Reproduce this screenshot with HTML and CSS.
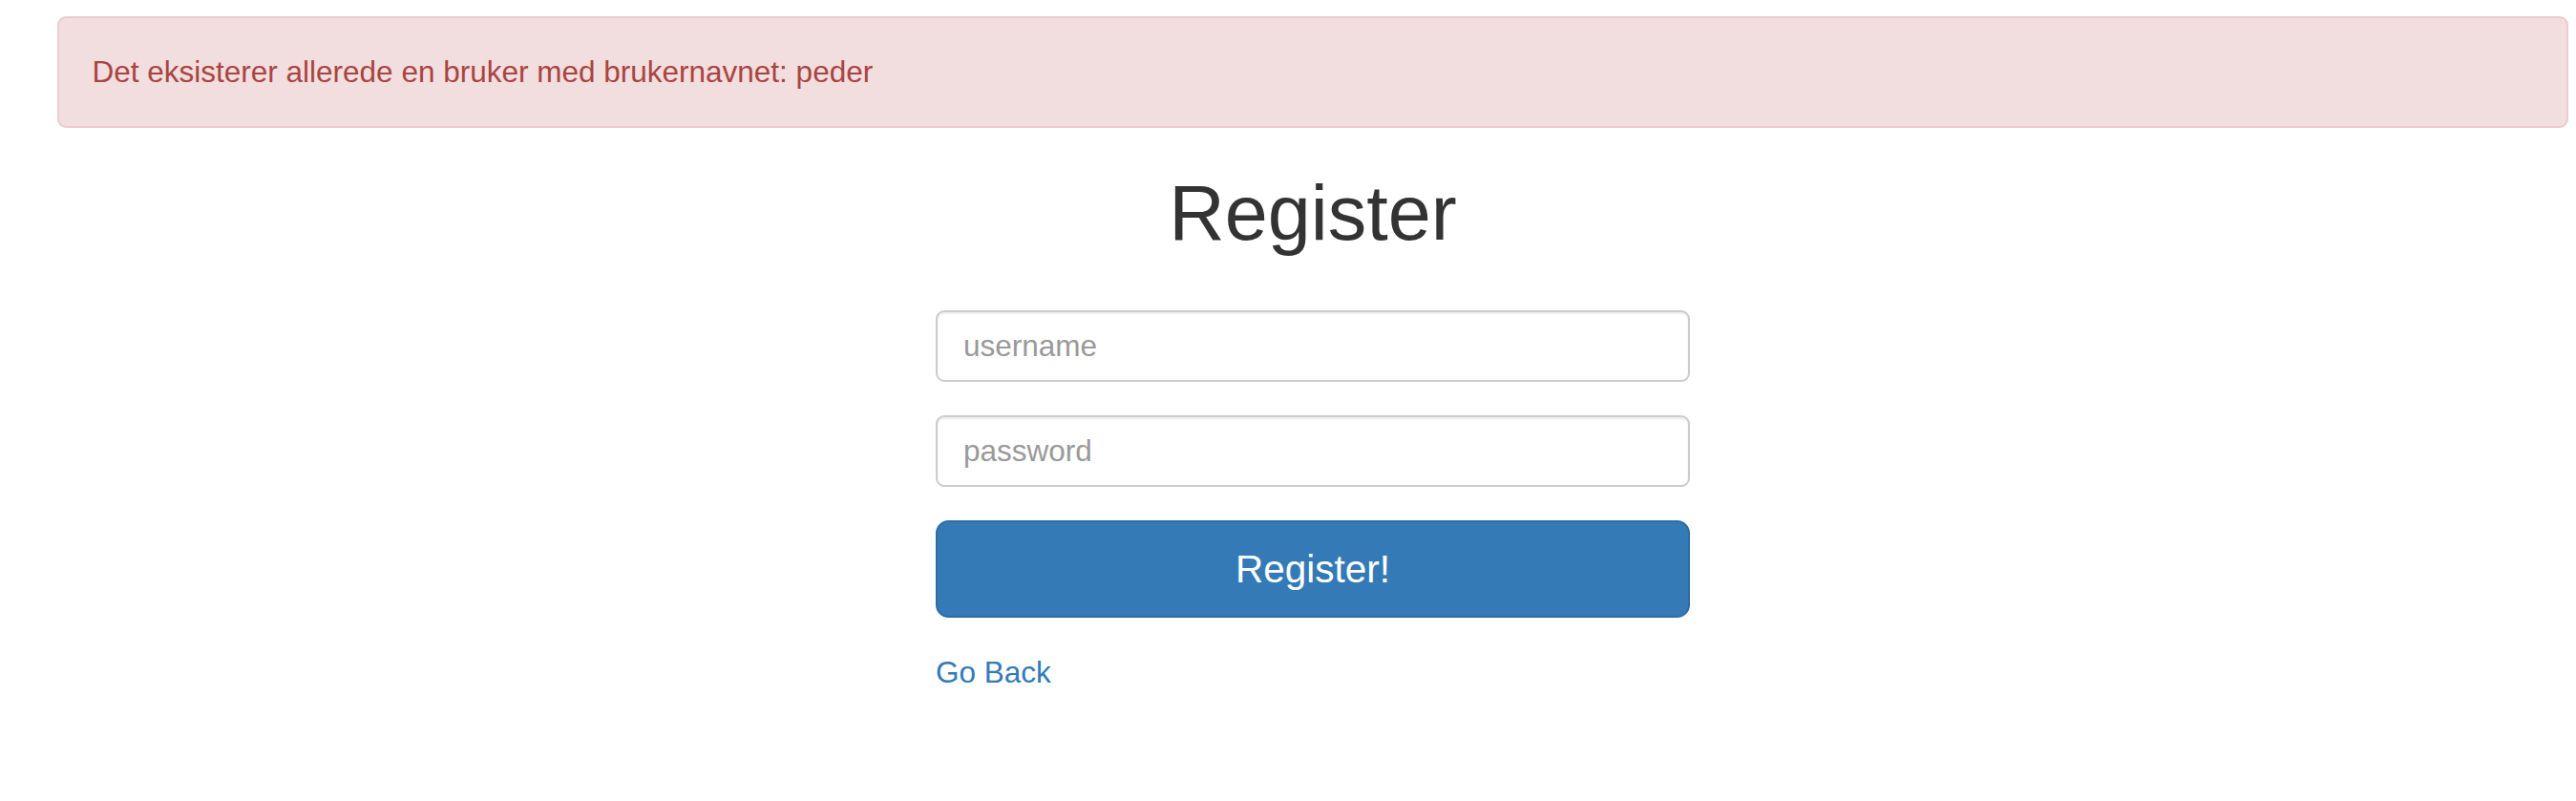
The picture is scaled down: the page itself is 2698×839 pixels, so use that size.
FILE: index.html
```html
<!DOCTYPE html>
<html lang="no">
<head>
<meta charset="utf-8">
<title>Register</title>
<link rel="stylesheet" href="styles.css">
</head>
<body>
<div class="page">
  <div class="alert">Det eksisterer allerede en bruker med brukernavnet: peder</div>
  <h1 class="title">Register</h1>
  <form class="form">
    <input class="field" type="text" placeholder="username">
    <input class="field" type="password" placeholder="password">
    <button class="btn" type="button">Register!</button>
    <a class="back" href="#">Go Back</a>
  </form>
</div>
</body>
</html>
```

FILE: styles.css
```css
html, body {
  margin: 0;
  padding: 0;
  background: #fff;
}
body {
  font-family: "Liberation Sans", Arial, sans-serif;
  color: #333;
  font-size: 31.5px;
  line-height: 45px;
}
.page {
  padding: 17px 8px 0 60px;
}
.alert {
  background: #f2dede;
  border: 2px solid #ebccd1;
  border-radius: 9px;
  color: #a94442;
  padding: 33.75px 34.5px;
  line-height: 45px;
  font-size: 31.5px;
}
.title {
  margin: 45px 0 57px;
  text-align: center;
  font-weight: 500;
  font-size: 81px;
  line-height: 89px;
  color: #333;
}
.form {
  width: 790px;
  margin: 0 auto;
  display: flex;
  flex-direction: column;
  gap: 35px;
}
.field {
  box-sizing: border-box;
  height: 75px;
  width: 100%;
  margin: 0;
  padding: 0 27px;
  border: 2px solid #ccc;
  border-radius: 9px;
  font-family: "Liberation Sans", Arial, sans-serif;
  font-size: 31.5px;
  color: #555;
  background: #fff;
  box-shadow: inset 0 2px 2px rgba(0, 0, 0, 0.075);
  outline: none;
}
.field::placeholder {
  color: #999;
  opacity: 1;
}
.btn {
  box-sizing: border-box;
  height: 102px;
  width: 100%;
  margin: 0;
  border: 2px solid #2e6da4;
  border-radius: 13.5px;
  background: #337ab7;
  color: #fff;
  font-family: "Liberation Sans", Arial, sans-serif;
  font-size: 40.5px;
  line-height: 54px;
  cursor: pointer;
}
.back {
  align-self: flex-start;
  color: #337ab7;
  text-decoration: none;
  font-size: 31.5px;
  line-height: 45px;
}
```
